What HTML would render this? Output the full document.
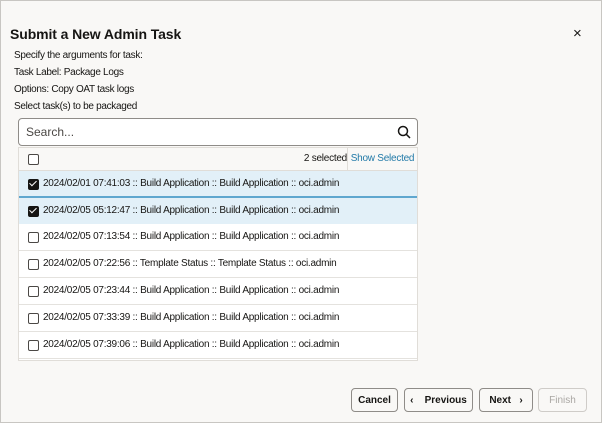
<!DOCTYPE html><html><head><style>
*{box-sizing:border-box;margin:0;padding:0}
body{width:602px;height:423px;background:#f9f8f6;font-family:"Liberation Sans",sans-serif;color:#161513;position:relative;overflow:hidden}
.frame{position:absolute;left:0;top:0;width:602px;height:423px;border:1px solid #c8c6c2;pointer-events:none}
.a{position:absolute}
.t{font-size:10px;left:14px;letter-spacing:-0.3px}
.cb{position:absolute;left:9px;width:11px;height:11px;border:1.5px solid #4b4845;border-radius:2px;background:#fff}
.cb.on{background:#161513;border-color:#161513}
.cb.on::after{content:"";position:absolute;left:2px;top:-1px;width:3px;height:6px;border:solid #fff;border-width:0 1.5px 1.5px 0;transform:rotate(45deg)}
.row{position:absolute;left:0;width:398px;height:27px;border-bottom:1px solid #e4e2de;background:#fff;font-size:10px;letter-spacing:-0.25px;line-height:26px;padding-left:24px}
.sel{background:#e2f0f8}
.btn{position:absolute;top:388px;height:24px;border:1px solid #8f8c88;border-radius:4px;background:#f9f8f6;font-size:10px;font-weight:bold;line-height:24px;text-align:center}
</style></head><body>
<div class="frame"></div>
<div class="a" style="left:10px;top:26px;font-size:14px;font-weight:bold;letter-spacing:-0.1px">Submit a New Admin Task</div>
<div class="a" style="left:573px;top:25px;font-size:15px">×</div>
<div class="a t" style="top:50px">Specify the arguments for task:</div>
<div class="a t" style="top:67px">Task Label: Package Logs</div>
<div class="a t" style="top:84px">Options: Copy OAT task logs</div>
<div class="a t" style="top:101px">Select task(s) to be packaged</div>
<div class="a" style="left:18px;top:118px;width:400px;height:28px;border:1px solid #8f8c88;border-radius:4px;background:#fff;font-size:12px;line-height:26px;padding-left:7px;color:#4b4845">Search...
<svg class="a" style="right:6px;top:6px" width="14" height="14" viewBox="0 0 14 14"><circle cx="6" cy="6" r="4.5" fill="none" stroke="#161513" stroke-width="1.5"/><path d="M9.3 9.3L13 13" stroke="#161513" stroke-width="1.5"/></svg></div>
<div class="a" style="left:18px;top:147px;width:400px;height:214px;border:1px solid #e0ddd8;background:#fff">
<div class="row" style="top:0;height:23px;line-height:22px;background:#f9f8f6;border-bottom:1px solid #e0ddd8"><span class="cb" style="top:6px"></span>
<span class="a" style="right:70px;top:0">2 selected</span><span class="a" style="left:328px;top:0;width:70px;border-left:1px solid #e0ddd8;text-align:center;color:#227aa8">Show Selected</span></div>
<div class="row sel" style="top:23px;border-bottom:2px solid #5fa7cf"><span class="cb on" style="top:8px"></span>2024/02/01 07:41:03 :: Build Application :: Build Application :: oci.admin</div>
<div class="row sel" style="top:50px"><span class="cb on" style="top:8px"></span>2024/02/05 05:12:47 :: Build Application :: Build Application :: oci.admin</div>
<div class="row" style="top:76px"><span class="cb" style="top:8px"></span>2024/02/05 07:13:54 :: Build Application :: Build Application :: oci.admin</div>
<div class="row" style="top:103px"><span class="cb" style="top:8px"></span>2024/02/05 07:22:56 :: Template Status :: Template Status :: oci.admin</div>
<div class="row" style="top:130px"><span class="cb" style="top:8px"></span>2024/02/05 07:23:44 :: Build Application :: Build Application :: oci.admin</div>
<div class="row" style="top:157px"><span class="cb" style="top:8px"></span>2024/02/05 07:33:39 :: Build Application :: Build Application :: oci.admin</div>
<div class="row" style="top:184px"><span class="cb" style="top:8px"></span>2024/02/05 07:39:06 :: Build Application :: Build Application :: oci.admin</div>
</div>
<div class="btn" style="left:351px;width:47px">Cancel</div>
<div class="btn" style="left:404px;width:69px">‹&nbsp;&nbsp;&nbsp; Previous</div>
<div class="btn" style="left:479px;width:54px">Next&nbsp;&nbsp; ›</div>
<div class="btn" style="left:538px;width:49px;color:#aaa7a3;border-color:#cfccc8;font-weight:normal">Finish</div>
</body></html>
